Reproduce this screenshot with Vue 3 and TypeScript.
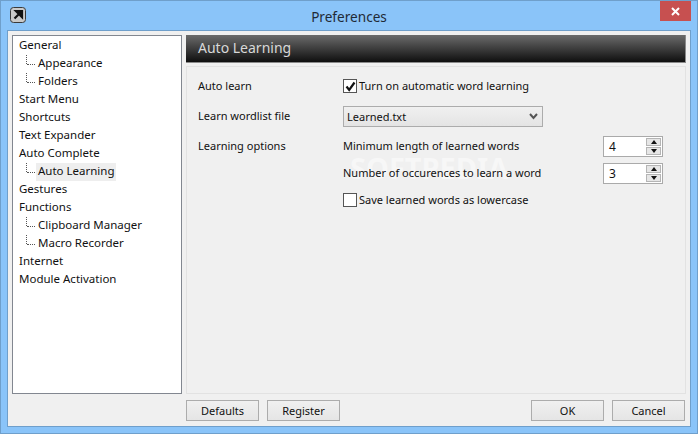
<script setup lang="ts">
interface Node { label: string; children?: string[] }
const tree: Node[] = [
  { label: 'General', children: ['Appearance', 'Folders'] },
  { label: 'Start Menu' },
  { label: 'Shortcuts' },
  { label: 'Text Expander' },
  { label: 'Auto Complete', children: ['Auto Learning'] },
  { label: 'Gestures' },
  { label: 'Functions', children: ['Clipboard Manager', 'Macro Recorder'] },
  { label: 'Internet' },
  { label: 'Module Activation' },
]
const selected = 'Auto Learning'
</script>

<template>
  <div class="window">
    <div class="titlebar">
      <div class="appicon">
        <svg width="16" height="16" viewBox="0 0 16 16">
          <rect x="0.5" y="0.5" width="15" height="15" rx="3" fill="#c9c9c9" stroke="#3a3a3a" />
          <path d="M4.5 11.5 L10 6 M6 4 H12 V10 Z" stroke="#111" stroke-width="2.2" fill="#111" />
        </svg>
      </div>
      <div class="title">Preferences</div>
      <div class="close">
        <svg width="9" height="9" viewBox="0 0 9 9"><path d="M1 1 L8 8 M8 1 L1 8" stroke="#fff" stroke-width="2" /></svg>
      </div>
    </div>
    <div class="client">
      <div class="main">
        <div class="tree">
          <template v-for="n in tree" :key="n.label">
            <div class="row">{{ n.label }}</div>
            <div v-for="c in n.children" :key="c" class="row child">
              <span :class="{ sel: c === selected }">{{ c }}</span>
            </div>
          </template>
        </div>
        <div class="right">
          <div class="header">Auto Learning</div>
          <div class="panel">
            <div class="watermark">SOFTPEDIA</div>
            <div class="form">
              <div class="lbl lbl1">Auto learn</div>
              <label class="check h1"><span class="box"><svg width="11" height="11" viewBox="0 0 11 11"><path d="M1.5 5.5 L4.2 9 L9.5 1.5" fill="none" stroke="#111" stroke-width="2.2" /></svg></span><span class="txt">Turn on automatic word learning</span></label>
              <div class="lbl lbl2">Learn wordlist file</div>
              <div class="select h2">
                <span>Learned.txt</span>
                <svg width="9" height="7" viewBox="0 0 9 7"><path d="M1 1 L4.5 5 L8 1" fill="none" stroke="#555" stroke-width="2" /></svg>
              </div>
              <div class="lbl lbl3">Learning options</div>
              <div class="opts">
                <div class="optrow">
                  <span class="txt">Minimum length of learned words</span>
                  <div class="spin"><span class="val">4</span><div class="arrows"><b><i class="up"></i></b><b><i class="down"></i></b></div></div>
                </div>
                <div class="optrow">
                  <span class="txt">Number of occurences to learn a word</span>
                  <div class="spin"><span class="val">3</span><div class="arrows"><b><i class="up"></i></b><b><i class="down"></i></b></div></div>
                </div>
                <label class="check h3"><span class="box"></span><span class="txt">Save learned words as lowercase</span></label>
              </div>
            </div>
          </div>
        </div>
      </div>
      <div class="footer">
        <button class="btn">Defaults</button>
        <button class="btn">Register</button>
        <div class="spacer"></div>
        <button class="btn">OK</button>
        <button class="btn">Cancel</button>
      </div>
    </div>
  </div>
</template>

<style>
html, body { margin: 0; padding: 0; }
</style>

<style scoped>
.window {
  width: 698px; height: 434px; box-sizing: border-box;
  background: #8ac4f9; border: 1px solid #6f9fcb;
  display: flex; flex-direction: column;
  font-family: "Noto Sans", "Open Sans", sans-serif; font-size: 11px; color: #111;
  overflow: hidden;
}
.titlebar { height: 29px; flex: none; position: relative; display: flex; justify-content: center; align-items: center; }
.appicon { position: absolute; left: 9px; top: 6px; width: 16px; height: 16px; }
.appicon svg { display: block; }
.title { font-size: 13.6px; color: #1f2a36; margin-top: 1px; }
.close { position: absolute; right: 6px; top: 0; width: 31px; height: 20px; background: #c75050; display: flex; align-items: center; justify-content: center; }
.client {
  flex: none; margin: 0 6px; height: 397px; box-sizing: border-box;
  background: #f0f0f0; border: 1px solid #6f9fcb; padding: 4px 4px 5px;
  display: flex; flex-direction: column;
}
.main { display: flex; gap: 4px; height: 359px; flex: none; }
.tree { width: 170px; box-sizing: border-box; background: #fff; border: 1px solid #828790; padding-top: 1px; font-size: 11.5px; }
.row { height: 18px; line-height: 16px; padding-left: 6px; white-space: nowrap; position: relative; }
.child { padding-left: 23px; }
.child span { display: inline-block; padding: 0 1px 2px 2px; vertical-align: top; }
.child .sel { background: #eeeeee; }
.child::before { content: ""; position: absolute; left: 13px; top: 0; height: 9px; border-left: 1px dotted #555; }
.child::after { content: ""; position: absolute; left: 14px; top: 9px; width: 8px; border-top: 1px dotted #555; }
.right { width: 500px; display: flex; flex-direction: column; gap: 3px; }
.header {
  height: 28px; flex: none; box-sizing: border-box; padding-left: 12px; line-height: 25px;
  background: linear-gradient(#6b6b6b, #0f0f0f); border-right: 1px solid #8a8a8a; border-bottom: 1px solid #8a8a8a;
  color: #d8d8d8; font-size: 14px;
}
.panel { flex: 1; box-sizing: border-box; border: 1px solid #e2e2e2; position: relative; }
.watermark {
  position: absolute; left: 163px; top: 85px; font-size: 29px; font-weight: 700; line-height: 32px;
  color: #f7f7f7; white-space: nowrap; pointer-events: none;
}
.form { position: relative; display: grid; grid-template-columns: 145px 1fr; padding: 12px 22px 0 11px; }
.lbl { line-height: 14px; }
.lbl1 { height: 27px; }
.lbl2 { height: 30px; padding-top: 3px; box-sizing: border-box; }
.lbl3 { padding-top: 3px; }
.check { display: flex; align-items: center; gap: 2px; height: 14px; white-space: nowrap; }
.txt { margin-bottom: 2px; }
.box { width: 12px; height: 12px; border: 1px solid #555; background: #fff; display: inline-flex; align-items: center; justify-content: center; flex: none; }
.select {
  width: 200px; height: 21px; box-sizing: border-box; border: 1px solid #acacac;
  background: linear-gradient(#f0f0f0, #e4e4e4); display: flex; align-items: center; justify-content: space-between;
  padding: 0 4px 0 3px; margin-bottom: 9px;
}
.opts { display: flex; flex-direction: column; }
.optrow { display: flex; justify-content: space-between; align-items: center; height: 21px; margin-bottom: 6px; white-space: nowrap; }
.h3 { margin-top: 3px; }
.spin { width: 60px; height: 21px; box-sizing: border-box; border: 1px solid #aaa; background: #fff; display: flex; justify-content: space-between; }
.val { padding-left: 5px; line-height: 19px; font-size: 12px; }
.arrows { width: 15px; margin: 1px; display: flex; flex-direction: column; gap: 1px; }
.arrows b { flex: 1; background: #e6e6e6; border: 1px solid #b5b5b5; display: flex; align-items: center; justify-content: center; }
.up, .down { width: 0; height: 0; border-left: 3.5px solid transparent; border-right: 3.5px solid transparent; }
.up { border-bottom: 4px solid #111; }
.down { border-top: 4px solid #111; }
.footer { display: flex; gap: 8px; margin-top: 6px; padding-left: 174px; padding-right: 1px; }
.spacer { flex: 1; }
.btn {
  width: 73px; height: 21px; box-sizing: border-box; padding: 0; border: 1px solid #acacac;
  background: linear-gradient(#f0f0f0, #e5e5e5); font: inherit; color: #111;
}
</style>
